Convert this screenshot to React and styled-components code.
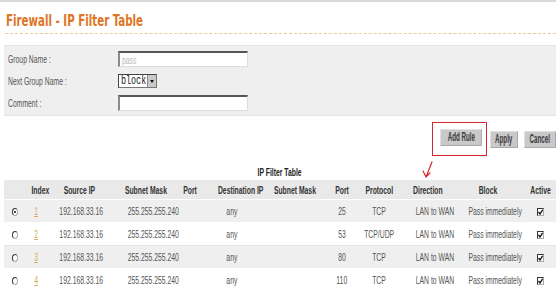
import React from "react";
import styled, { createGlobalStyle } from "styled-components";

const GlobalStyle = createGlobalStyle`
  html, body { margin: 0; padding: 0; background: #fff; }
  body {
    font-family: "Liberation Sans", Arial, sans-serif;
    font-size: 11px;
    color: #555;
  }
`;

// the page's fonts are very narrow; squeeze text horizontally
const Sq = styled.span`
  display: inline-block; white-space: nowrap;
  transform: scaleX(${(p) => p.k || 0.62});
  transform-origin: ${(p) => (p.left ? "left" : "center")} center;
`;

const Page = styled.div`
  width: 556px; height: 286px; overflow: hidden;
  border-top: 2px solid #d9d9d9;
  box-sizing: border-box;
`;
const Title = styled.h1`
  margin: 0; padding: 10px 0 0 6px; height: 21px;
  font-family: "DejaVu Sans Condensed", "DejaVu Sans", sans-serif;
  font-size: 15px; font-weight: bold;
  color: #e07526;
`;
const Divider = styled.div`
  margin: 0 0 0 5px; height: 0;
  border-bottom: 1px dashed #f0c693;
`;
const FormPanel = styled.div`
  margin: 11px 0 0 4px; padding: 5px 0 4px 4px;
  background: #efefef; border-top: 1px solid #e4e4e4; border-bottom: 1px solid #e4e4e4;
  display: grid; grid-template-columns: 110px 1fr; row-gap: 7px; align-items: center;
`;
const Label = styled.div`
  color: #555;
`;
const TextInput = styled.div`
  box-sizing: border-box; width: 130px; height: 16px; padding: 0 2px;
  background: #fff; color: #b8b8b8; line-height: 14px;
  border: 1px solid #ddd; border-top: 2px solid #555; border-left: 2px solid #8a8a8a;
`;
const SelectBox = styled.div`
  box-sizing: border-box; width: 39px; height: 14px;
  display: flex; align-items: stretch;
  background: #fff; border: 1px solid #777; border-top-color: #444; border-left-color: #444;
  font-family: "Liberation Mono", "DejaVu Sans Mono", monospace; font-size: 12px; color: #222;
`;
const SelectValue = styled.div`
  flex: 1; min-width: 0; overflow: visible; line-height: 12px; padding-left: 2px;
`;
const SelectArrow = styled.div`
  flex: none; width: 8px; background: #c9c9c9; border-left: 1px solid #888;
  display: flex; align-items: center; justify-content: center;
  &::after { content: ""; border: 2px solid transparent; border-top: 3px solid #111; margin-top: 3px; }
`;
const ButtonBar = styled.div`
  display: flex; justify-content: flex-end; align-items: center; gap: 6px;
  height: 36px; margin-top: 5px;
`;
const Highlight = styled.div`
  position: relative;
  width: 55px; height: 34px; box-sizing: border-box;
  border: 1px solid #d7262c;
  display: flex; align-items: center; justify-content: flex-end; padding: 0 4px 4px 0;
  margin-right: -3px;
`;
const Arrow = styled.svg`
  position: absolute; left: -11px; top: 38px;
`;
const Button = styled.button`
  box-sizing: border-box; height: 17px; margin: 0; width: ${(p) => p.w}px; padding: 0;
  background: #c9c9c9; border: 1px solid #e0e0e0; border-right-color: #aaa; border-bottom-color: #aaa;
  font-family: inherit; font-size: 12px; font-weight: bold; color: #3a3a3a;
  display: flex; align-items: center; justify-content: center;
  cursor: pointer;
`;
const Caption = styled.div`
  text-align: center; margin: 9px 0 0 4px; height: 14px;
  font-weight: bold; color: #222;
`;
const Table = styled.table`
  margin-left: 4px; width: 552px; border-collapse: collapse; table-layout: fixed;
  th, td { padding: 0; text-align: center; white-space: nowrap; }
  th {
    height: 19px; background: #e9e9e9; color: #333; font-weight: bold;
    border-bottom: 1px solid #fff;
  }
  td { height: 22px; color: #555; border-bottom: 1px solid #fff; }
  tbody tr:nth-child(odd) td { background: #efefef; }
  tbody tr:nth-child(even) td { border-bottom-color: #e6e6e6; }
`;
const IndexLink = styled.a`
  color: #d9a859; text-decoration: underline;
`;
const Radio = styled.span`
  display: inline-block; box-sizing: border-box; width: 6px; height: 8px; border-radius: 50%;
  border: 1px solid #aaa; border-top-color: #333; border-left-color: #333; background: #fff;
  position: relative; vertical-align: middle;
  ${(p) => p.checked && `&::after { content: ""; position: absolute; left: 1px; top: 2px; width: 2px; height: 2px; border-radius: 50%; background: #111; }`}
`;
const Check = styled.span`
  display: inline-flex; align-items: center; justify-content: center; box-sizing: border-box;
  width: 7px; height: 8px; border: 1px solid #333; border-right-color: #aaa; border-bottom-color: #aaa;
  background: #fff; vertical-align: middle;
`;

const cols = [22, 20, 66, 64, 28, 56, 70, 24, 50, 48, 72, 32];
const heads = ["", "Index", "Source IP", "Subnet Mask", "Port", "Destination IP", "Subnet Mask", "Port", "Protocol", "Direction", "Block", "Active"];
const rules = [
  { port: 25, proto: "TCP" },
  { port: 53, proto: "TCP/UDP" },
  { port: 80, proto: "TCP" },
  { port: 110, proto: "TCP" },
];

export default function App() {
  return (
    <Page>
      <GlobalStyle />
      <Title><Sq left k={0.76}>Firewall - IP Filter Table</Sq></Title>
      <Divider />
      <FormPanel>
        <Label><Sq left>Group Name :</Sq></Label>
        <TextInput><Sq left>pass</Sq></TextInput>
        <Label><Sq left>Next Group Name :</Sq></Label>
        <SelectBox>
          <SelectValue><Sq left k={0.7}>block</Sq></SelectValue>
          <SelectArrow />
        </SelectBox>
        <Label><Sq left>Comment :</Sq></Label>
        <TextInput />
      </FormPanel>
      <ButtonBar>
        <Highlight>
          <Button w={42}><Sq k={0.52}>Add Rule</Sq></Button>
          <Arrow width="12" height="18" viewBox="0 0 12 18">
            <path d="M10 1 L4 16 M1 10 L4 16 L8 12" fill="none" stroke="#d7262c" strokeWidth="1.2" strokeLinecap="round" />
          </Arrow>
        </Highlight>
        <Button w={28}><Sq k={0.52}>Apply</Sq></Button>
        <Button w={32}><Sq k={0.52}>Cancel</Sq></Button>
      </ButtonBar>
      <Caption><Sq>IP Filter Table</Sq></Caption>
      <Table>
        <colgroup>
          {cols.map((w, i) => <col key={i} style={{ width: w }} />)}
        </colgroup>
        <thead>
          <tr>
            {heads.map((h, i) => <th key={i}>{h && <Sq>{h}</Sq>}</th>)}
          </tr>
        </thead>
        <tbody>
          {rules.map((r, i) => (
            <tr key={i}>
              <td><Radio checked={i === 0} /></td>
              <td><Sq><IndexLink>{i + 1}</IndexLink></Sq></td>
              <td><Sq>192.168.33.16</Sq></td>
              <td><Sq>255.255.255.240</Sq></td>
              <td></td>
              <td><Sq>any</Sq></td>
              <td></td>
              <td><Sq>{r.port}</Sq></td>
              <td><Sq>{r.proto}</Sq></td>
              <td><Sq>LAN to WAN</Sq></td>
              <td><Sq>Pass immediately</Sq></td>
              <td>
                <Check>
                  <svg width="5" height="6" viewBox="0 0 5 6"><path d="M0.5 3 L2 5 L4.6 0.8" fill="none" stroke="#111" strokeWidth="1.3" /></svg>
                </Check>
              </td>
            </tr>
          ))}
        </tbody>
      </Table>
    </Page>
  );
}
